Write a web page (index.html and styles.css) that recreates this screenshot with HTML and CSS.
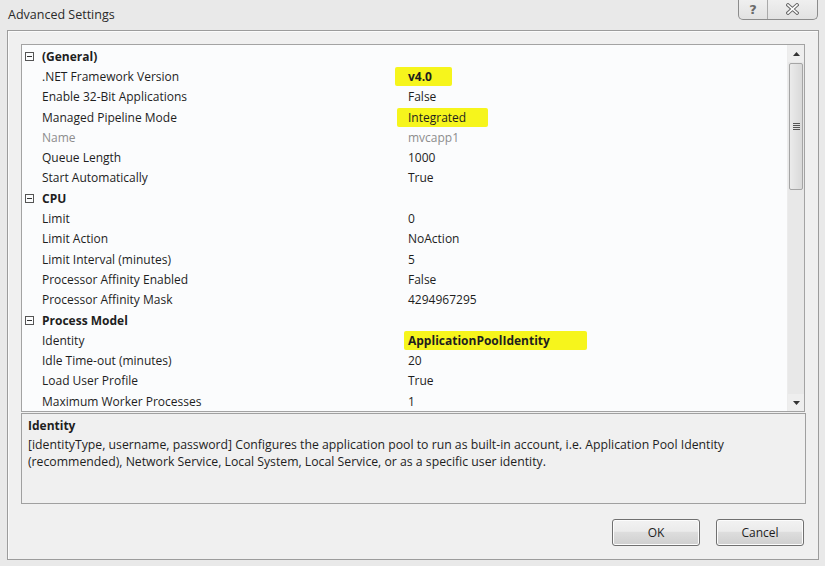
FILE: index.html
```html
<!DOCTYPE html>
<html>
<head>
<meta charset="utf-8">
<link rel="stylesheet" href="styles.css">
</head>
<body>
<div class="window">
  <div class="titlebar">
    <span class="title">Advanced Settings</span>
    <div class="caption-buttons">
      <div class="cap-btn help">?</div>
      <div class="cap-btn close">
        <svg width="13" height="12" viewBox="0 0 13 12"><path d="M2 2 L11 10 M11 2 L2 10" stroke="#6a6a6a" stroke-width="3.6" stroke-linecap="square" fill="none"/><path d="M2 2 L11 10 M11 2 L2 10" stroke="#fff" stroke-width="1.6" stroke-linecap="square" fill="none"/></svg>
      </div>
    </div>
  </div>
  <div class="frame">
    <div class="grid">
      <div class="rows">
        <div class="row cat"><span class="gut"><span class="minus"></span></span><span class="name">(General)</span></div>
        <div class="row"><span class="gut"></span><span class="name">.NET Framework Version</span><span class="val"><span class="hl hl1 b">v4.0</span></span></div>
        <div class="row"><span class="gut"></span><span class="name">Enable 32-Bit Applications</span><span class="val">False</span></div>
        <div class="row"><span class="gut"></span><span class="name">Managed Pipeline Mode</span><span class="val"><span class="hl hl2">Integrated</span></span></div>
        <div class="row dim"><span class="gut"></span><span class="name">Name</span><span class="val">mvcapp1</span></div>
        <div class="row"><span class="gut"></span><span class="name">Queue Length</span><span class="val">1000</span></div>
        <div class="row"><span class="gut"></span><span class="name">Start Automatically</span><span class="val">True</span></div>
        <div class="row cat"><span class="gut"><span class="minus"></span></span><span class="name">CPU</span></div>
        <div class="row"><span class="gut"></span><span class="name">Limit</span><span class="val">0</span></div>
        <div class="row"><span class="gut"></span><span class="name">Limit Action</span><span class="val">NoAction</span></div>
        <div class="row"><span class="gut"></span><span class="name">Limit Interval (minutes)</span><span class="val">5</span></div>
        <div class="row"><span class="gut"></span><span class="name">Processor Affinity Enabled</span><span class="val">False</span></div>
        <div class="row"><span class="gut"></span><span class="name">Processor Affinity Mask</span><span class="val">4294967295</span></div>
        <div class="row cat"><span class="gut"><span class="minus"></span></span><span class="name">Process Model</span></div>
        <div class="row"><span class="gut"></span><span class="name">Identity</span><span class="val"><span class="hl hl3 b">ApplicationPoolIdentity</span></span></div>
        <div class="row"><span class="gut"></span><span class="name">Idle Time-out (minutes)</span><span class="val">20</span></div>
        <div class="row"><span class="gut"></span><span class="name">Load User Profile</span><span class="val">True</span></div>
        <div class="row"><span class="gut"></span><span class="name">Maximum Worker Processes</span><span class="val">1</span></div>
      </div>
      <div class="scrollbar">
        <div class="sb-btn"><svg width="7" height="4" viewBox="0 0 7 4"><path d="M0 4 L3.5 0 L7 4 Z" fill="#333"/></svg></div>
        <div class="sb-thumb"><span class="grip"></span><span class="grip"></span><span class="grip"></span><span class="grip"></span></div>
        <div class="sb-track"></div>
        <div class="sb-btn"><svg width="7" height="4" viewBox="0 0 7 4"><path d="M0 0 L7 0 L3.5 4 Z" fill="#333"/></svg></div>
      </div>
    </div>
    <div class="desc">
      <div class="desc-title">Identity</div>
      <div class="desc-text">[identityType, username, password] Configures the application pool to run as built-in account, i.e. Application Pool Identity<br>(recommended), Network Service, Local System, Local Service, or as a specific user identity.</div>
    </div>
    <div class="buttons">
      <div class="btn">OK</div>
      <div class="btn">Cancel</div>
    </div>
  </div>
</div>
</body>
</html>
```
FILE: styles.css
```css
* { box-sizing: border-box; }
html, body { margin: 0; padding: 0; }
body {
  width: 825px;
  height: 566px;
  overflow: hidden;
  background: #e9e9e9;
  font-family: "Open Sans", "Noto Sans", sans-serif;
  font-size: 12px;
  color: #1e1e1e;
}
.window { width: 825px; height: 566px; position: relative; }
.titlebar {
  height: 30px;
  padding-left: 8px;
  display: flex;
  align-items: center;
}
.title { font-size: 12.5px; color: #2a2a2a; margin-top: -1px; }
.caption-buttons {
  position: absolute;
  right: 7px;
  top: -1px;
  display: flex;
  border: 1px solid #8c8c8c;
  border-top: none;
  border-radius: 0 0 5px 5px;
  background: linear-gradient(#f0f0f0, #e2e2e2);
  height: 21px;
  overflow: hidden;
}
.cap-btn {
  display: flex;
  align-items: center;
  justify-content: center;
  height: 20px;
  font-family: "DejaVu Sans", sans-serif;
  font-weight: bold;
  font-size: 13px;
  color: #6a6a6a;
}
.help { width: 29px; border-right: 1px solid #a9a9a9; }
.close { width: 49px; }
.frame {
  margin-left: 7px;
  width: 812px;
  height: 530px;
  border: 1px solid #9c9c9c;
  background: #f0f0f0;
  box-shadow: inset 1px 1px 0 #fbfbfb;
  padding: 13px 12px 0 13px;
  display: flex;
  flex-direction: column;
}
.grid {
  height: 368px;
  width: 784px;
  border: 1px solid #a3a3a3;
  background: #fbfcfd;
  display: flex;
}
.rows { flex: 1; padding-top: 1px; }
.row {
  height: 20.3px;
  display: flex;
  align-items: center;
  white-space: nowrap;
}
.gut { width: 20px; display: flex; align-items: center; padding-left: 3px; }
.minus {
  width: 9px;
  height: 9px;
  border: 1px solid #555;
  position: relative;
  display: block;
}
.minus::after {
  content: "";
  position: absolute;
  left: 1px; right: 1px; top: 3px;
  height: 1px;
  background: #333;
}
.name { width: 366px; padding-left: 0; }
.cat .name { font-weight: bold; }
.val { padding-left: 0; }
.dim { color: #8d8d8d; }
.b { font-weight: bold; }
.hl {
  display: inline-block;
  background: #f6f51c;
  height: 19px;
  line-height: 19px;
  border-radius: 2px;
}
.hl1 { margin-left: -13px; padding-left: 13px; width: 57px; }
.hl2 { margin-left: -11px; padding-left: 11px; width: 91px; }
.hl3 { margin-left: -4px; padding-left: 4px; width: 183px; }
.scrollbar {
  width: 17px;
  display: flex;
  flex-direction: column;
  background: #e8e8e8;
  border-left: 1px solid #ececec;
}
.sb-btn {
  height: 17px;
  display: flex;
  align-items: center;
  justify-content: center;
  background: #eeeeee;
}
.sb-thumb {
  height: 127px;
  margin: 1px 1px;
  border: 1px solid #a5a5a5;
  border-radius: 2px;
  background: linear-gradient(90deg, #ebebeb, #d9d9d9);
  display: flex;
  flex-direction: column;
  align-items: center;
  justify-content: center;
  gap: 1px;
}
.grip { width: 7px; height: 1px; background: #555; }
.sb-track { flex: 1; }
.desc {
  margin-top: 1px;
  height: 91px;
  width: 785px;
  border: 1px solid #a0a0a0;
  background: #f0f0f0;
  padding: 3px 6px;
}
.desc-title { font-weight: bold; line-height: 18px; }
.desc-text { line-height: 17px; margin-top: 1px; font-size: 12.25px; }
.buttons {
  display: flex;
  justify-content: flex-end;
  gap: 16px;
  margin-top: 15px;
  width: 783px;
}
.btn {
  width: 88px;
  height: 27px;
  border: 1px solid #707070;
  border-radius: 3px;
  background: linear-gradient(#f2f2f2 0%, #ebebeb 45%, #dddddd 50%, #cfcfcf 100%);
  box-shadow: inset 0 0 0 1px #fcfcfc;
  display: flex;
  align-items: center;
  justify-content: center;
  color: #1e1e1e;
}
```
